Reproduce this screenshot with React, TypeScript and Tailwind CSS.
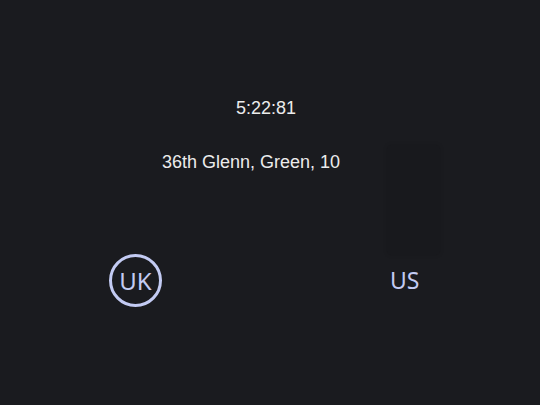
export default function App() {
  return (
    <div className="w-[540px] h-[405px] bg-[#1a1b1f] overflow-hidden" style={{ fontFamily: '"Liberation Sans", Arial, sans-serif' }}>
      <div className="pt-[97px] pl-[236px] text-[18px] leading-[22px] text-[#ececec]">5:22:81</div>
      <div className="flex items-start mt-[26px]">
        <div className="ml-[162px] mt-[6px] text-[18px] leading-[22px] text-[#ececec]">36th Glenn, Green, 10</div>
        <div className="ml-[47px] w-[53px] h-[110px] bg-black/[0.05] rounded-sm shadow-[0_0_4px_rgba(0,0,0,0.12)]" />
      </div>
      <div className="flex items-center -mt-[1px]" style={{ fontFamily: '"Noto Sans", sans-serif' }}>
        <div className="ml-[109px] w-[53px] h-[53px] rounded-full border-[3px] border-[#c3cbf3] flex items-center justify-center text-[24px] leading-none text-[#c3cbf3]">
          UK
        </div>
        <div className="ml-[228px] text-[23px] leading-none text-[#c3cbf3]">US</div>
      </div>
    </div>
  );
}
